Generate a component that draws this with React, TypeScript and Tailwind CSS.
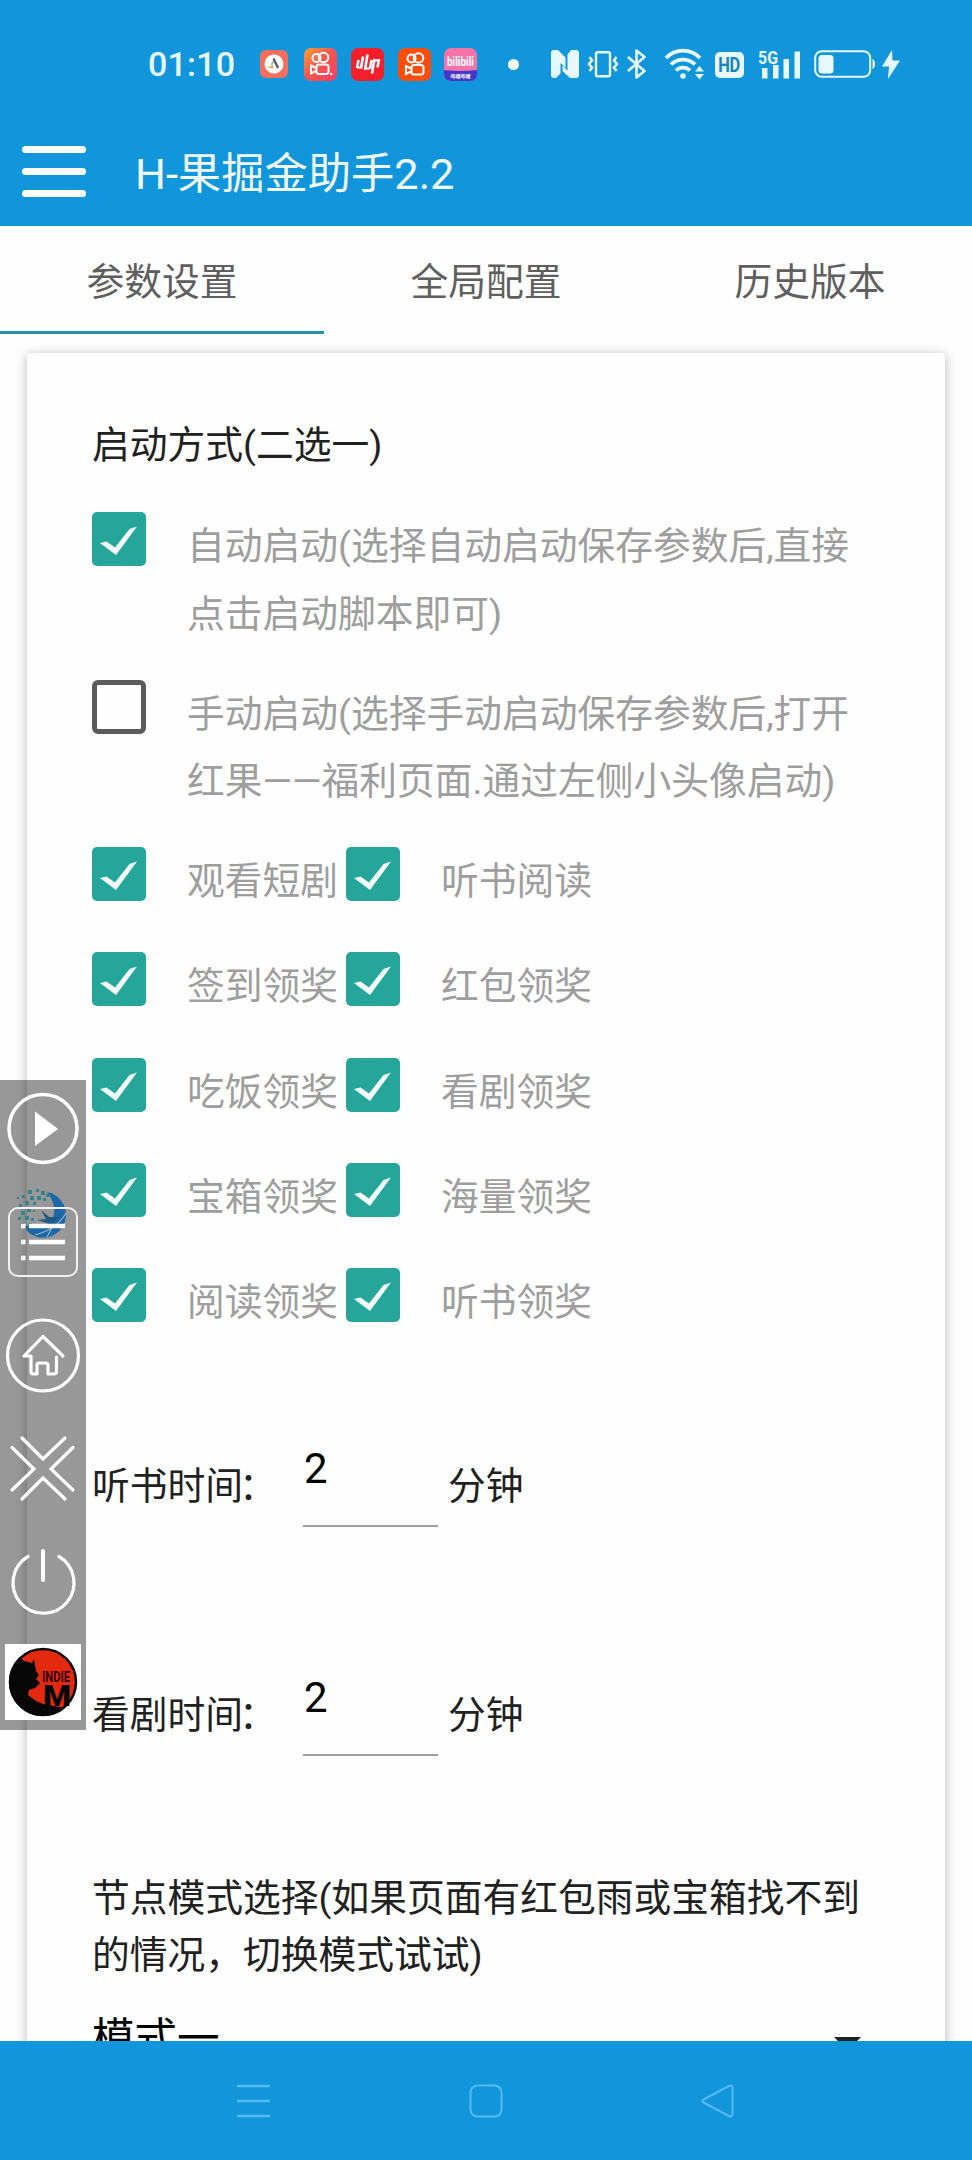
import { useState } from "react";

const tabs = ["参数设置", "全局配置", "历史版本"];

const rewards = [
  ["观看短剧", "听书阅读"],
  ["签到领奖", "红包领奖"],
  ["吃饭领奖", "看剧领奖"],
  ["宝箱领奖", "海量领奖"],
  ["阅读领奖", "听书领奖"],
];

const CheckBox = ({ checked }: { checked: boolean }) => {
  if (!checked) {
    return <span className="block h-[54px] w-[54px] shrink-0 rounded-[6px] border-[5px] border-[#5b5b5b]" />;
  }
  return (
    <span className="block h-[54px] w-[54px] shrink-0 rounded-[5px] bg-[#26a69a]">
      <svg viewBox="0 0 54 54" className="h-full w-full" fill="#f2fffd">
        <path d="M8 31L14.500 29.500L23 35.500L37.500 17L45 14.500L24 43Z" />
      </svg>
    </span>
  );
};

const Option = ({ lines, checked = true }: { lines: string[]; checked?: boolean }) => {
  const [on, setOn] = useState(checked);
  return (
    <div className="flex cursor-pointer items-start" onClick={() => setOn(!on)}>
      <CheckBox checked={on} />
      <div className="ml-[41px] text-[#9e9e9e]">
        {lines.map((line) => (
          <p key={line} className="h-[67.5px] whitespace-nowrap leading-[68px]">
            {line}
          </p>
        ))}
      </div>
    </div>
  );
};

const TimeField = ({ label, value }: { label: string; value: string }) => (
  <div className="flex h-[96px] items-start">
    <span className="w-[211px] whitespace-nowrap pt-[25px] leading-[56px]">
      {label}
      <span className="-ml-[4px]">：</span>
    </span>
    <span className="h-[94px] w-[135px] border-b-[2.5px] border-[#9e9e9e] pl-px text-[42px] leading-[72px] text-black">{value}</span>
    <span className="ml-[10px] pt-[25px] leading-[56px]">分钟</span>
  </div>
);

const CameraMark = () => (
  <g fill="none" stroke="#fff" strokeWidth="2">
    <circle cx="12.5" cy="10" r="4" />
    <circle cx="19.5" cy="9.5" r="4.8" />
    <rect x="12.5" y="16.5" width="12" height="9.5" rx="2.5" />
    <path d="M12 20L7 17.5V25.5L12 23" />
  </g>
);

const StatusBar = () => (
  <div className="flex h-[128px] items-center pl-[148px] text-[#e6f7ff]">
    <span className="w-[111px] whitespace-nowrap text-[34px] font-medium leading-none tracking-[0.2px]">01:10</span>

    {/* notification icons */}
    <svg className="h-[30px] w-[30px]" viewBox="0 0 30 30">
      <rect x="1" y="1" width="28" height="28" rx="6" fill="#f4705c" />
      <circle cx="15" cy="15" r="9.5" fill="#fff" />
      <path d="M14.500 9.500L19 19" stroke="#4c5560" strokeWidth="2.200" />
      <path d="M14.500 12L12.500 16" stroke="#a9b3b9" strokeWidth="1.800" />
      <path d="M8.500 18.500L14 16L14.500 19.500Z" fill="#f2a25c" />
    </svg>
    <svg className="ml-[15px] h-[33px] w-[33px]" viewBox="0 0 33 33">
      <defs>
        <linearGradient id="lite" x1="0" y1="0" x2="1" y2="1">
          <stop offset="0" stopColor="#f7a135" />
          <stop offset="0.45" stopColor="#f8584e" />
          <stop offset="1" stopColor="#f53a63" />
        </linearGradient>
      </defs>
      <rect width="33" height="33" rx="7" fill="url(#lite)" />
      <CameraMark />
      <circle cx="27.3" cy="26" r="1.2" fill="#fff" />
    </svg>
    <svg className="ml-[14px] h-[33px] w-[33px]" viewBox="0 0 33 33">
      <rect width="33" height="33" rx="7" fill="#f3202c" />
      <g stroke="#fff" strokeWidth="2.600" fill="none">
        <path d="M7.500 12L6 20M12 8.500L10 20.500M16.500 6.500L14 22M20.500 12L19 20.500M23.500 11L21 25.500M28 11L26.500 19.500" />
        <path d="M22 12.500H27.500M6 19.500H10M14 20.500H19" strokeWidth="2" />
      </g>
    </svg>
    <svg className="ml-[14px] h-[33px] w-[33px]" viewBox="0 0 33 33">
      <rect width="33" height="33" rx="7" fill="#fb4e0c" />
      <g transform="translate(1 0.5)">
        <CameraMark />
      </g>
    </svg>
    <svg className="ml-[13px] h-[33px] w-[33px]" viewBox="0 0 33 33">
      <rect width="33" height="33" rx="7" fill="#f573a8" />
      <path d="M0 22Q16 24 33 22V26Q33 33 26 33H7Q0 33 0 26Z" fill="#4338ca" />
      <text x="16.5" y="18" textAnchor="middle" fontSize="12" fontWeight="700" fill="#fff" textLength="27" lengthAdjust="spacingAndGlyphs">
        bilibili
      </text>
      <text x="16.5" y="29.5" textAnchor="middle" fontSize="5" fontWeight="700" fill="#fff">
        哔哩哔哩
      </text>
    </svg>
    <span className="ml-[31px] h-[11px] w-[11px] rounded-full bg-white" />

    {/* system icons */}
    <svg className="ml-[32px] h-[28px] w-[28px]" viewBox="0 0 28 28" fill="currentColor">
      <path d="M3 0H7L14.500 7.500V18L9.500 13V23.500L5 28H3Q0 28 0 25V3Q0 0 3 0Z" />
      <path d="M20 0H25Q28 0 28 3V25Q28 28 25 28H19L11.500 21V15.500L16.500 20.500V4.500Z" />
    </svg>
    <svg className="ml-[8px] h-[28px] w-[32px]" viewBox="0 0 32 28" fill="none" stroke="currentColor" strokeWidth="2.4">
      <rect x="9" y="2.2" width="14" height="24" rx="1.5" />
      <path d="M2.500 7L5 10.500L2 14L5 17.500L2.500 21M29.500 7L27 10.500L30 14L27 17.500L29.500 21" strokeWidth="2.500" />
    </svg>
    <svg className="ml-[8px] h-[30px] w-[20px]" viewBox="0 0 20 30" fill="none" stroke="currentColor" strokeWidth="2.600" strokeLinejoin="round">
      <path d="M1 8L17.5 22L9.5 28.5V1.5L17.5 8L1 22" />
    </svg>
    <svg className="ml-[17px] h-[32px] w-[40px]" viewBox="0 0 40 32" fill="none" stroke="currentColor" strokeWidth="3.800">
      <path d="M2 11A23.5 23.5 0 0 1 36 11" transform="translate(0 -1)" />
      <path d="M7 16.5A17 17 0 0 1 31 16.5" />
      <path d="M12 22.500A10 10 0 0 1 26 22.500" />
      <circle cx="19" cy="28" r="2.8" fill="currentColor" stroke="none" />
      <path d="M31 23.5L35.5 18L40 23.5ZM31 26L35.5 31.5L40 26Z" fill="currentColor" stroke="none" />
    </svg>
    <span className="ml-[11px] mt-[2px] flex h-[26px] w-[29px] items-center justify-center rounded-[5px] bg-current">
      <span className="text-[20px] font-bold leading-none tracking-[-0.5px] text-[#1683bd]">
        <span className="inline-block scale-x-[0.82]">HD</span>
      </span>
    </span>
    <svg className="ml-[14px] h-[32px] w-[43px]" viewBox="0 0 43 32" fill="currentColor">
      <text x="0" y="15.5" fontSize="18" fontWeight="700" textLength="20" lengthAdjust="spacingAndGlyphs">
        5G
      </text>
      <path d="M4 20H9.500V30.500H4ZM15 17H20.500V30.500H15ZM25.500 11H31V30.500H25.500ZM36.500 3.500H42V30.500H36.500Z" />
    </svg>
    <svg className="ml-[13px] h-[28px] w-[61px]" viewBox="0 0 61 28">
      <rect x="1.2" y="1.2" width="55" height="25.600" rx="6.500" fill="none" stroke="currentColor" strokeWidth="2" />
      <rect x="4.500" y="5" width="15" height="18.500" rx="3.500" fill="currentColor" />
      <path d="M58.500 9Q61 10 61 14T58.500 19Z" fill="currentColor" />
    </svg>
    <svg className="ml-[7px] h-[29px] w-[18px]" viewBox="0 0 18 29" fill="currentColor">
      <path d="M10 0L0 16.500H7L6 29L18 10.500H10.500Z" />
    </svg>
  </div>
);

const FloatingPanel = () => (
  <div className="absolute left-0 top-[1080px] flex h-[650px] w-[86px] flex-col items-center bg-black/40 pt-[10px]">
    <svg className="h-[76px] w-[80px] shrink-0" viewBox="0 0 80 76" fill="none" stroke="#fff" strokeWidth="3.500">
      <circle cx="40" cy="38.500" r="34" />
      <path d="M32 21.500V56L55 39Z" fill="#fff" stroke="none" />
    </svg>

    <svg className="mt-[38px] h-[76px] w-[80px] shrink-0 overflow-visible" viewBox="0 0 80 76">
      {/* globe with scattered pixels on its left edge */}
      <path d="M44 -12A23 23 0 1 1 22 25Q38 31 48 18Q56 4 44 -12Z" fill="#1c67a8" />
      <path d="M20 21Q34 26 50 17L55 27Q44 35 29 30Z" fill="#1c67a8" />
      <path d="M38 6L46 13L58 13L49 18L51 25L44 19L34 16L43 15Z" fill="#215a83" />
      <path d="M32 31Q54 25 63 9M44 33L49 24" stroke="#9bb4c4" strokeWidth="1.200" fill="none" />
      <g fill="#37828f">
        <path d="M25 -14h4v4h-4zM33 -15h3v3h-3zM38 -13h4v4h-4zM43 -10h3v3h-3zM19 -9h3v3h-3zM27 -8h4v4h-4zM34 -8h4v4h-4zM40 -6h3v3h-3zM14 -7h2v2h-2zM22 -3h4v4h-4zM30 -2h3v3h-3zM16 0h3v3h-3zM24 4h4v4h-4zM18 7h4v4h-4zM30 6h2v2h-2zM15 13h3v3h-3zM22 12h4v4h-4zM28 14h3v3h-3zM18 19h4v4h-4zM25 19h4v4h-4z" />
      </g>
      <rect x="6" y="4" width="68" height="68" rx="9" fill="none" stroke="#f1f1f1" strokeWidth="2" />
      <path d="M18 22H22.500M18 38H22.500M18 54H22.500M26 22H62M26 38H62M26 54H62" stroke="#fff" strokeWidth="4.500" />
    </svg>

    <svg className="mt-[38px] h-[76px] w-[80px] shrink-0" viewBox="0 0 80 76" fill="none" stroke="#fff" strokeWidth="3.200" strokeLinecap="round" strokeLinejoin="round">
      <circle cx="40" cy="37.500" r="35.500" />
      <path d="M60 38L40 18.500L21 38H28V54Q28 56 30 56H34V47Q34 45 36 45H43Q45 45 45 47V56H51Q53.500 56 53.500 53V39" />
    </svg>

    <svg className="mt-[38px] h-[76px] w-[80px] shrink-0" viewBox="0 0 80 76" fill="none" stroke="#fff" strokeWidth="3.200" strokeLinecap="round">
      <path d="M19 6L40 27L62 6M19 67L40 46L62 67M9 15.500L31 37L9 58M70 15.500L48 37L70 58" />
    </svg>

    <svg className="mt-[37px] h-[76px] w-[80px] shrink-0" viewBox="0 0 80 76" fill="none" stroke="#fff" strokeWidth="3.200" strokeLinecap="round">
      <path d="M25 11.500A30.500 30.500 0 1 0 56 11.500" />
      <path d="M40 6V35" strokeWidth="4" />
    </svg>

    <svg className="mt-[23px] h-[76px] w-[76px] shrink-0 bg-white" viewBox="0 0 76 76">
      <circle cx="38" cy="38" r="33" fill="#e42a0e" stroke="#0b0b0b" strokeWidth="2.500" />
      <path d="M4 38A34 34 0 0 1 15 13L19 17L27 19L29 15L31 27L34 31L31 35L35 39L30 44L24 46L23 51L31 57L38 60L60 64A34 34 0 0 1 4 38Z" fill="#060606" />
      <text x="37" y="38" fontSize="14" fontWeight="700" fill="#300" textLength="28" lengthAdjust="spacingAndGlyphs">
        INDIE
      </text>
      <text x="38" y="62" fontSize="29" fontWeight="900" fill="#060606" textLength="28" lengthAdjust="spacingAndGlyphs">
        M
      </text>
    </svg>
  </div>
);

const App = () => {
  const [active, setActive] = useState(0);

  return (
    <div className="relative flex h-[2160px] w-[972px] flex-col overflow-hidden bg-[#fefefe] font-['Roboto','Noto_Sans_CJK_SC',sans-serif] text-[37.750px] text-[#212121]">
      <header className="h-[226px] shrink-0 bg-[#1296db]">
        <StatusBar />
        <div className="flex items-start pl-[22px] pt-[18px]">
          <div className="flex w-[64px] flex-col gap-[15px]">
            <span className="h-[7px] rounded-full bg-white" />
            <span className="h-[7px] rounded-full bg-white" />
            <span className="h-[7px] rounded-full bg-white" />
          </div>
          <h1 className="mt-px ml-[49px] text-[43.300px] leading-[56px] text-[#f0fcff]">H-果掘金助手2.2</h1>
        </div>
      </header>

      <nav className="grid h-[108px] shrink-0 grid-cols-3">
        {tabs.map((tab, i) => (
          <button
            key={tab}
            onClick={() => setActive(i)}
            className={
              i === active
                ? "border-b-[3px] border-[#2590b4] pt-[8px] text-[#5f5f5f]"
                : "border-b-[3px] border-transparent pt-[8px] text-[#5f5f5f]"
            }
          >
            {tab}
          </button>
        ))}
      </nav>

      <main className="min-h-0 flex-1 overflow-hidden px-[27px] pt-[19px]">
        <section className="h-[1800px] rounded-[4px] bg-[#fefefe] px-[65px] pt-[64px] shadow-[0_2px_12px_rgba(0,0,0,0.28)]">
          <h2 className="leading-[56px]">启动方式(二选一)</h2>

          <div className="mt-[39px] flex flex-col gap-[32.500px]">
            <Option lines={["自动启动(选择自动启动保存参数后,直接", "点击启动脚本即可)"]} />
            <Option lines={["手动启动(选择手动启动保存参数后,打开", "红果——福利页面.通过左侧小头像启动)"]} checked={false} />
          </div>

          <div className="mt-[32.500px] flex flex-col gap-[37.800px]">
            {rewards.map(([left, right]) => (
              <div key={left} className="flex gap-[8px]">
                <Option lines={[left]} />
                <Option lines={[right]} />
              </div>
            ))}
          </div>

          <div className="mt-[97px] flex flex-col gap-[133.500px]">
            <TimeField label="听书时间" value="2" />
            <TimeField label="看剧时间" value="2" />
          </div>

          <p className="mt-[112px] whitespace-nowrap leading-[57px]">
            节点模式选择(如果页面有红包雨或宝箱找不到
            <br />
            的情况，切换模式试试)
          </p>

          <div className="mt-[26px] flex items-start justify-between text-black">
            <span className="text-[42.500px] leading-[58px]">模式一</span>
            <svg className="mr-[19px] mt-[27px] h-[14px] w-[27px]" viewBox="0 0 27 14" fill="#222">
              <path d="M0 0H27L13.500 14Z" />
            </svg>
          </div>
        </section>
      </main>

      {/* system navigation */}
      <footer className="flex h-[119px] shrink-0 items-center justify-between bg-[#1296db] pl-[236px] pr-[238px] text-[#56b9f2]">
        <svg className="h-[34px] w-[35px]" viewBox="0 0 35 34" stroke="currentColor" strokeWidth="2.500">
          <path d="M1 2H34M1 17H34M1 32H34" />
        </svg>
        <svg className="h-[34px] w-[34px]" viewBox="0 0 34 34" fill="none" stroke="currentColor" strokeWidth="2">
          <rect x="1.500" y="1.500" width="31" height="31" rx="7" />
        </svg>
        <svg className="h-[34px] w-[34px]" viewBox="0 0 34 34" fill="none" stroke="currentColor" strokeWidth="2" strokeLinejoin="round">
          <path d="M29 2L3.500 15.500Q1 17 3.500 18.500L29 32Q32.500 33.500 32.500 30V4Q32.500 0.500 29 2Z" />
        </svg>
      </footer>

      <FloatingPanel />
    </div>
  );
};

export default App;
